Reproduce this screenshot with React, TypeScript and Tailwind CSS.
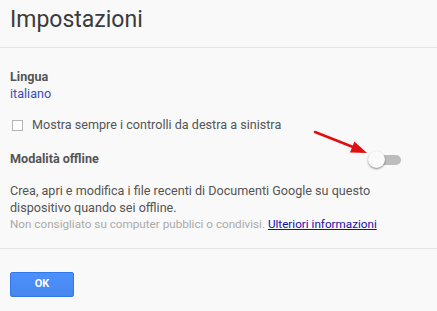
import type React from "react"

const App: React.FC = () => {
  return (
    <div className="w-[437px] h-[311px] bg-[#f9f9f9] overflow-hidden font-['Roboto',sans-serif] text-[12.6px]">
      <div className="h-[48px] pl-[10px] pt-[5px] border-b border-[#e3e3e3]">
        <h1 className="text-[23px] leading-[30px] text-[#3b3b3b]">Impostazioni</h1>
      </div>

      <div className="px-[10px] pt-[20px] h-[201px] border-b border-[#e3e3e3]">
        <div className="font-bold text-[#555] leading-[17px]">Lingua</div>
        <div className="text-[#3b4eb4] leading-[17px]">italiano</div>

        <label className="flex items-center mt-[15px] h-[17px] text-[#555]">
          <span className="w-[11px] h-[11px] ml-[2px] mr-[9px] border border-[#b5b5b5] bg-white" />
          Mostra sempre i controlli da destra a sinistra
        </label>

        <div className="relative flex items-center justify-between mt-[17px] h-[17px]">
          <span className="font-bold text-[#555]">Modalità offline</span>
          <div className="relative w-[33px] h-[17px] mr-[26px] flex items-center">
            <div className="absolute left-[2px] right-0 h-[10px] rounded-full bg-[#bdbdbd]" />
            <div className="absolute left-0 w-[17px] h-[17px] rounded-full bg-[#fafafa] shadow-[0_1px_2px_rgba(0,0,0,0.45)]" />
          </div>
          <svg className="absolute left-[294px] top-[-28px]" width="66" height="34" viewBox="0 0 66 34">
            <line x1="11" y1="9" x2="49" y2="24" stroke="#e01010" strokeWidth="2.5" strokeLinecap="round" />
            <polygon points="63,30 46,29.6 50.4,18.4" fill="#e01010" />
          </svg>
        </div>

        <p className="mt-[15px] text-[#555] leading-[16.5px]">
          Crea, apri e modifica i file recenti di Documenti Google su questo dispositivo quando sei offline.
        </p>
        <p className="text-[11.7px] leading-[16.5px]">
          <span className="text-[#aaa]">Non consigliato su computer pubblici o condivisi. </span>
          <a className="text-[#1a0dab] underline">Ulteriori informazioni</a>
        </p>
      </div>

      <div className="px-[10px] pt-[23px]">
        <button className="w-[64px] h-[25px] rounded-[2px] border border-[#3079ed] bg-gradient-to-b from-[#4d90fe] to-[#4787ed] text-white text-[11px] font-bold">
          OK
        </button>
      </div>
    </div>
  )
}

export default App
